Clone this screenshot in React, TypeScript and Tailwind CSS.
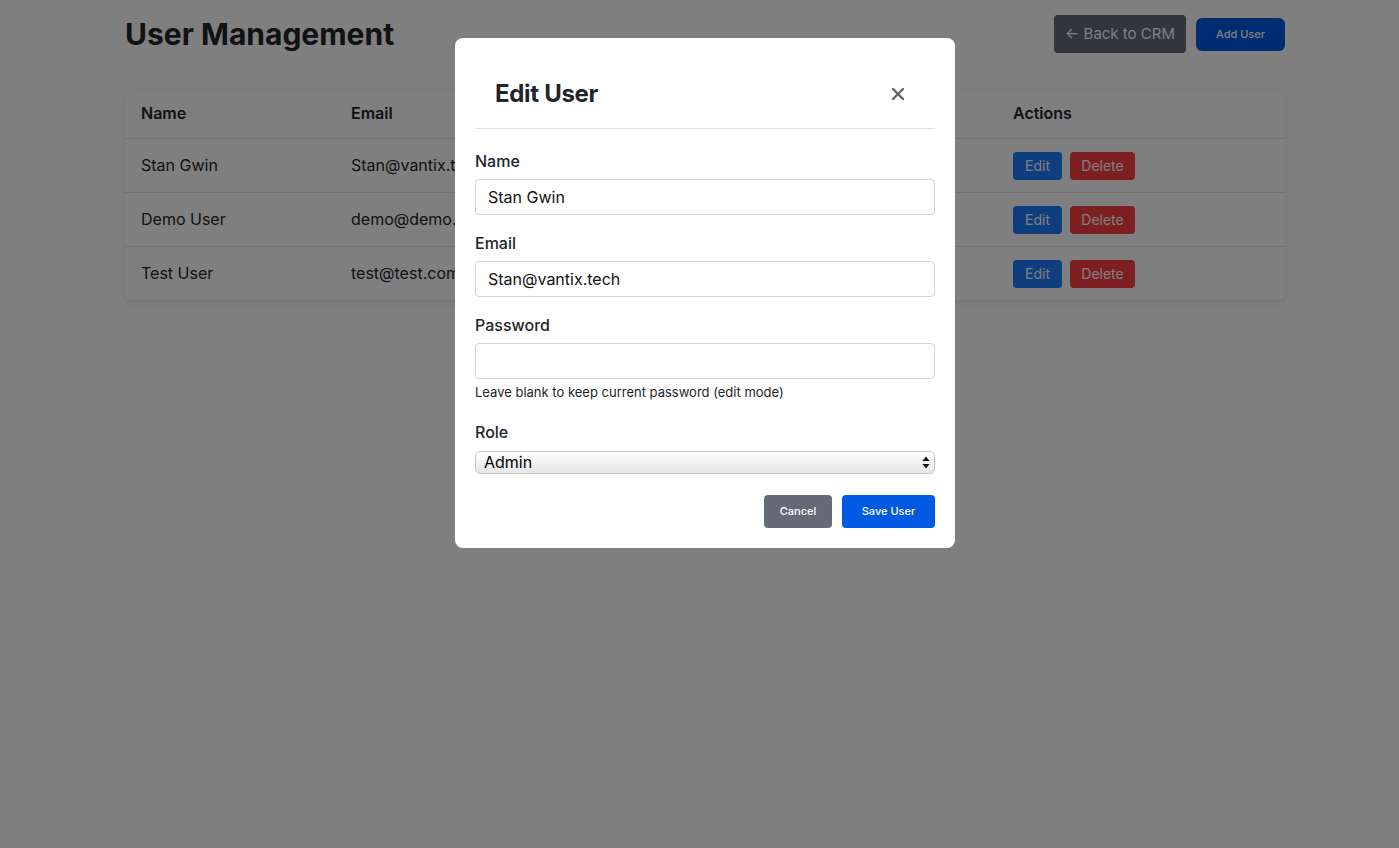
import { useState } from 'react';

type User = { id: number; name: string; email: string; role: string; created: string };

const users: User[] = [
  { id: 1, name: 'Stan Gwin', email: 'Stan@vantix.tech', role: 'Admin', created: '1/12/2025' },
  { id: 2, name: 'Demo User', email: 'demo@demo.com', role: 'User', created: '1/12/2025' },
  { id: 3, name: 'Test User', email: 'test@test.com', role: 'User', created: '1/12/2025' },
];

const font = { fontFamily: 'Inter, "Noto Sans", sans-serif' };

function UserTable() {
  return (
    <div className="overflow-hidden rounded-md bg-white shadow-[0_2px_6px_rgba(0,0,0,0.12)]">
      <table className="w-full table-fixed border-collapse text-left">
        <thead>
          <tr className="h-[47px] border-b border-[#dee2e6]">
            <th className="w-[226px] pb-[2px] pl-4 text-base font-semibold text-[#212529]">Name</th>
            <th className="w-[330px] pb-[2px] text-base font-semibold text-[#212529]">Email</th>
            <th className="w-[170px] pb-[2px] text-base font-semibold text-[#212529]">Role</th>
            <th className="w-[162px] pb-[2px] text-base font-semibold text-[#212529]">Created</th>
            <th className="pb-[2px] text-base font-semibold text-[#212529]">Actions</th>
          </tr>
        </thead>
        <tbody>
          {users.map((u, i) => (
            <tr key={u.id} className={`h-[54px] ${i < users.length - 1 ? 'border-b border-[#dee2e6]' : ''}`}>
              <td className="pl-4 text-base text-[#212529]">{u.name}</td>
              <td className="text-base text-[#212529]">{u.email}</td>
              <td className="text-base text-[#212529]">{u.role}</td>
              <td className="text-base text-[#212529]">{u.created}</td>
              <td>
                <div className="flex gap-2 pt-[1px]">
                  <button className="h-7 w-[49px] rounded bg-[#1f7cfc] text-sm text-white">Edit</button>
                  <button className="h-7 w-[65px] rounded bg-[#fa3c42] text-sm text-white">Delete</button>
                </div>
              </td>
            </tr>
          ))}
        </tbody>
      </table>
    </div>
  );
}

function Field({ label, value, help }: { label: string; value: string; help?: string }) {
  const [v, setV] = useState(value);
  return (
    <div className="mb-4">
      <label className="mb-1.5 block text-base font-medium leading-6 text-[#212529]">{label}</label>
      <input
        value={v}
        onChange={(e) => setV(e.target.value)}
        type={label === 'Password' ? 'password' : 'text'}
        className="block h-9 w-full rounded border border-[#ced4da] px-3 text-base text-[#111] outline-none"
      />
      {help && <p className="mt-1 text-[13px] leading-[18px] text-[#212529]">{help}</p>}
    </div>
  );
}

function EditUserModal() {
  return (
    <div className="w-[500px] rounded-lg bg-white px-5 pb-5 pt-5">
      <div className="flex h-[71px] items-center justify-between border-b border-[#dee2e6] pl-5 pr-[30px] pt-[2px]">
        <h2 className="text-2xl font-bold tracking-[-0.3px] text-[#212529]">Edit User</h2>
        <button className="text-[#5f6570]">
          <svg width="14" height="14" viewBox="0 0 14 14" fill="none" stroke="currentColor" strokeWidth="2.4" strokeLinecap="round">
            <path d="M2 2l10 10M12 2L2 12" />
          </svg>
        </button>
      </div>
      <div className="pt-5">
        <Field label="Name" value="Stan Gwin" />
        <Field label="Email" value="Stan@vantix.tech" />
        <Field label="Password" value="" help="Leave blank to keep current password (edit mode)" />
        <div className="mt-[19px]">
          <label className="mb-[7px] block text-base font-medium leading-6 text-[#212529]">Role</label>
          <div className="relative">
            <select
              defaultValue="Admin"
              className="block h-[23px] w-full appearance-none rounded-[5px] border border-[#c8c8c8] bg-gradient-to-b from-white to-[#e6e6e6] pl-2 text-base leading-[21px] text-black outline-none"
            >
              <option>Admin</option>
              <option>User</option>
            </select>
            <svg className="pointer-events-none absolute right-[5px] top-[5px]" width="8" height="13" viewBox="0 0 8 13" fill="#111">
              <path d="M4 0.5L7.5 5H0.5Z" />
              <path d="M4 12.5L7.5 8H0.5Z" />
            </svg>
          </div>
        </div>
        <div className="mt-[21px] flex justify-end gap-[10px]">
          <button className="h-[33px] w-[68px] rounded bg-[#646b76] text-[11px] font-medium text-white">Cancel</button>
          <button className="h-[33px] w-[93px] rounded bg-[#0059e2] text-[11px] font-medium text-white">Save User</button>
        </div>
      </div>
    </div>
  );
}

export default function App() {
  return (
    <div className="relative min-h-[848px] bg-white" style={font}>
      <div className="ml-[125px] w-[1160px]">
        <div className="flex items-start justify-between pt-[15px]">
          <h1 className="mt-[1px] text-[30px] font-bold leading-9 text-[#212529]">User Management</h1>
          <div className="flex items-center gap-[10px]">
            <button className="h-[38px] w-[132px] rounded bg-[#646b76] text-[15px] text-white">← Back to CRM</button>
            <button className="h-[33px] w-[89px] rounded-md bg-[#0059e2] text-[11px] font-medium text-white">Add User</button>
          </div>
        </div>
        <div className="mt-[38px]">
          <UserTable />
        </div>
      </div>

      <div className="fixed inset-0 bg-black/50">
        <div className="ml-[455px] mt-[38px] w-[500px]">
          <EditUserModal />
        </div>
      </div>
    </div>
  );
}
